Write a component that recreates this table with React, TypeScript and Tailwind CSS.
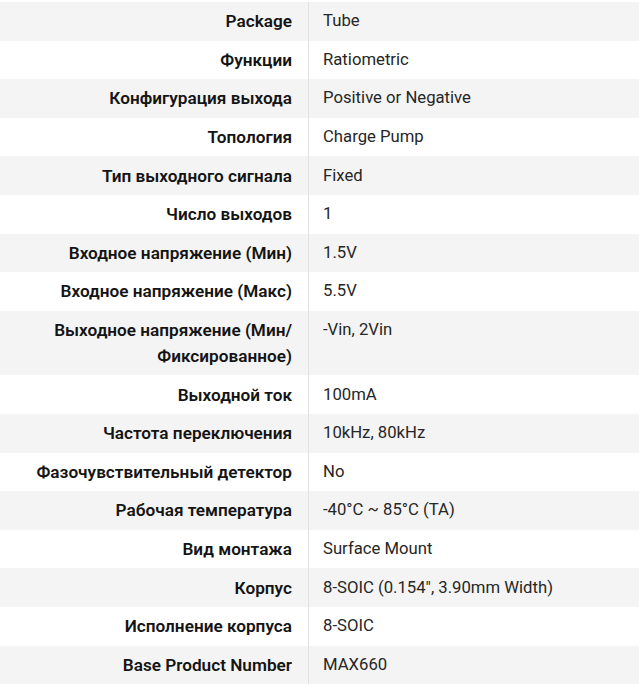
import React from "react";

const rows: [string, string][] = [
  ["Package", "Tube"],
  ["Функции", "Ratiometric"],
  ["Конфигурация выхода", "Positive or Negative"],
  ["Топология", "Charge Pump"],
  ["Тип выходного сигнала", "Fixed"],
  ["Число выходов", "1"],
  ["Входное напряжение (Мин)", "1.5V"],
  ["Входное напряжение (Макс)", "5.5V"],
  ["Выходное напряжение (Мин/ Фиксированное)", "-Vin, 2Vin"],
  ["Выходной ток", "100mA"],
  ["Частота переключения", "10kHz, 80kHz"],
  ["Фазочувствительный детектор", "No"],
  ["Рабочая температура", "-40°C ~ 85°C (TA)"],
  ["Вид монтажа", "Surface Mount"],
  ["Корпус", "8-SOIC (0.154\", 3.90mm Width)"],
  ["Исполнение корпуса", "8-SOIC"],
  ["Base Product Number", "MAX660"],
];

export default function App() {
  return (
    <div
      className="w-[639px] h-[688px] bg-white pt-[2px] overflow-hidden"
      style={{ fontFamily: "Roboto, 'Noto Sans', sans-serif" }}
    >
      <div className="grid grid-cols-[309px_1fr] leading-[26px]">
        {rows.map(([k, v], i) => (
          <React.Fragment key={i}>
            <div
              className={`${i % 2 === 0 ? "bg-[#f4f4f4]" : "bg-white"} text-right text-[17.2px] font-semibold text-[#141414] py-[6.3px] pr-[16px] pl-[10px] border-r border-[#e2e2e2]`}
            >
              {k}
            </div>
            <div
              className={`${i % 2 === 0 ? "bg-[#f4f4f4]" : "bg-white"} text-[16.7px] text-[#262626] py-[6.3px] pl-[14px]`}
            >
              {v}
            </div>
          </React.Fragment>
        ))}
      </div>
    </div>
  );
}
